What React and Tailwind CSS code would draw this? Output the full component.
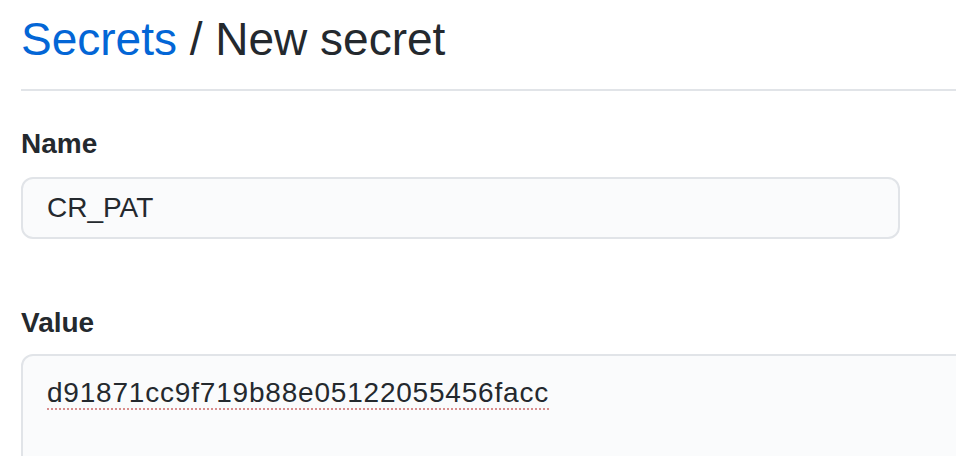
import React from "react";

const NewSecret = () => {
  return (
    <div className="h-[456px] w-full overflow-hidden bg-white pl-[21px] text-[#24292e] font-['Liberation_Sans',Arial,sans-serif]">
      {/* Breadcrumb header */}
      <div className="pt-[10px] pb-[21px] border-b-2 border-[#e1e4e8]">
        <h1 className="text-[46px] leading-[58px] font-normal">
          <a href="#" className="text-[#0366d6]">Secrets</a> / New secret
        </h1>
      </div>

      {/* Name */}
      <div className="mt-[35px] mr-[56px]">
        <label className="block text-[28px] leading-[36px] font-bold mb-[15px]">Name</label>
        <input
          readOnly
          defaultValue="CR_PAT"
          className="w-[879px] h-[62px] px-[24px] text-[28px] bg-[#fafbfc] border-2 border-[#e1e4e8] rounded-[12px] outline-none"
        />
      </div>

      {/* Value */}
      <div className="mt-[66px]">
        <label className="block text-[28px] leading-[36px] font-bold mb-[13px]">Value</label>
        <div className="w-[1000px] h-[220px] pt-[16px] px-[24px] text-[28px] leading-[42px] tracking-[0.8px] bg-[#fafbfc] border-2 border-[#e1e4e8] rounded-[12px]">
          <span className="underline decoration-dotted decoration-[#d88c8c] decoration-2 underline-offset-[6px]">
            d91871cc9f719b88e05122055456facc
          </span>
        </div>
      </div>
    </div>
  );
};

export default NewSecret;
